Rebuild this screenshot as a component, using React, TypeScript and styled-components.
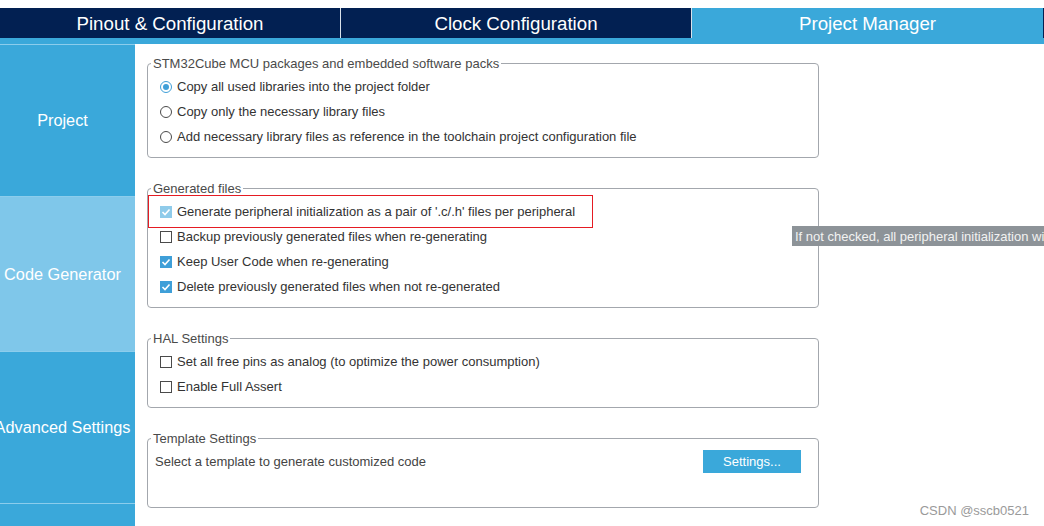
import React from 'react';
import styled, {createGlobalStyle} from 'styled-components';

const GlobalStyle = createGlobalStyle`
  html, body {
    margin: 0;
    padding: 0;
    background: #ffffff;
    overflow: hidden;
  }
  body {
    font-family: "Liberation Sans", Arial, sans-serif;
  }
`

const NAVY = '#022052';
const BLUE = '#3aa8da';

const Page = styled.div`
  position: relative;
  width: 1044px;
  height: 526px;
  padding-top: 8px;
  box-sizing: border-box;
  overflow: hidden;
`

const TabBar = styled.div`
  display: flex;
  height: 30px;
`

const Tab = styled.div<{ $active?: boolean; $width?: number }>`
  ${p => p.$width ? `width: ${p.$width}px;` : 'flex: 1;'}
  display: flex;
  align-items: center;
  justify-content: center;
  padding-top: 1px;
  box-sizing: border-box;
  background: ${p => p.$active ? BLUE : NAVY};
  color: #ffffff;
  font-size: 18.7px;
  border-left: 1px solid #d9e1ea;
  &:first-child {
    border-left: none;
  }
  &:last-child {
    border-right: 1px solid ${NAVY};
  }
`

const Strip = styled.div`
  height: 6px;
  background: ${BLUE};
`

const Body = styled.div`
  display: flex;
  height: 482px;
`

const Sidebar = styled.div`
  width: 135px;
  flex-shrink: 0;
  background: ${BLUE};
  border-top: 1px solid #8ccdec;
  overflow: hidden;
`

const SideItem = styled.div<{ $selected?: boolean }>`
  height: 151px;
  display: flex;
  align-items: center;
  justify-content: center;
  padding-right: 10px;
  background: ${p => p.$selected ? '#7fc7ea' : BLUE};
  border-bottom: 1px solid #8ccdec;
  color: #ffffff;
  font-size: 16.3px;
  white-space: nowrap;
  &:nth-child(2) {
    height: 154px;
  }
`

const Content = styled.div`
  flex: 1;
  padding: 12px 0 0 12px;
  position: relative;
`

const Group = styled.fieldset<{ $extra?: number }>`
  width: 672px;
  box-sizing: border-box;
  margin: 0 0 23px 0;
  padding: 3px 0 ${p => 8 + (p.$extra || 0)}px 0;
  border: 1px solid #a3a7ad;
  border-radius: 4px;
  min-inline-size: 0;
`

const Legend = styled.legend`
  margin-left: 3px;
  padding: 0 2px;
  font-size: 13px;
  line-height: 15px;
  color: #4a4a4a;
`

const Row = styled.div<{ $highlight?: boolean }>`
  position: relative;
  height: 25px;
  display: flex;
  align-items: center;
  gap: 5px;
  padding-left: 12px;
  font-size: 13px;
  color: #333333;
  white-space: nowrap;
  ${p => p.$highlight ? `
    &::after {
      content: '';
      position: absolute;
      left: 0;
      top: -4px;
      width: 445px;
      height: 33px;
      box-sizing: border-box;
      border: 1px solid #e51b23;
    }
  ` : ''}
`

const PlainText = styled(Row)`
  padding-left: 7px;
  padding-right: 17px;
  color: #444444;
`

const Box = styled.span<{ $checked?: boolean; $disabled?: boolean }>`
  width: 12px;
  height: 12px;
  box-sizing: border-box;
  flex-shrink: 0;
  display: inline-flex;
  align-items: center;
  justify-content: center;
  background: ${p => p.$checked ? (p.$disabled ? '#8fcbea' : '#3f9fd8') : '#ffffff'};
  border: 1px solid ${p => p.$checked ? (p.$disabled ? '#8fcbea' : '#3f9fd8') : '#4a4a4a'};
`

const Radio = styled.span<{ $checked?: boolean }>`
  width: 12px;
  height: 12px;
  box-sizing: border-box;
  flex-shrink: 0;
  border-radius: 50%;
  border: 1px solid ${p => p.$checked ? '#3f9fd8' : '#4a4a4a'};
  display: inline-flex;
  align-items: center;
  justify-content: center;
  &::after {
    content: '';
    width: 6px;
    height: 6px;
    border-radius: 50%;
    background: ${p => p.$checked ? '#3f9fd8' : 'transparent'};
  }
`

const Button = styled.button`
  margin-left: auto;
  width: 98px;
  height: 23px;
  border: none;
  background: ${BLUE};
  color: #ffffff;
  font-family: "Liberation Sans", Arial, sans-serif;
  font-size: 13px;
  padding: 0;
`

const Tooltip = styled.div`
  position: absolute;
  left: 792px;
  top: 226px;
  height: 20px;
  padding: 0 3px;
  display: flex;
  align-items: center;
  background: #8d9398;
  color: #f2f2f2;
  font-size: 13px;
  white-space: nowrap;
`

const Watermark = styled.div`
  position: absolute;
  right: 15px;
  bottom: 8px;
  color: #9a9a9a;
  font-size: 13px;
`

const Check: React.FC<{ checked?: boolean; disabled?: boolean }> = ({checked, disabled}) => (
    <Box $checked={checked} $disabled={disabled}>
        {checked && (
            <svg width="10" height="10" viewBox="0 0 10 10">
                <polyline points="1.5,5 4,7.5 8.5,2.5" fill="none" stroke="#ffffff" strokeWidth="1.6"/>
            </svg>
        )}
    </Box>
);

const App: React.FC = () => {
    return (
        <Page>
            <GlobalStyle/>
            <TabBar>
                <Tab $width={340}>Pinout &amp; Configuration</Tab>
                <Tab $width={351}>Clock Configuration</Tab>
                <Tab $active>Project Manager</Tab>
            </TabBar>
            <Strip/>
            <Body>
                <Sidebar>
                    <SideItem>Project</SideItem>
                    <SideItem $selected>Code Generator</SideItem>
                    <SideItem>Advanced Settings</SideItem>
                </Sidebar>
                <Content>
                    <Group>
                        <Legend>STM32Cube MCU packages and embedded software packs</Legend>
                        <Row><Radio $checked/>Copy all used libraries into the project folder</Row>
                        <Row><Radio/>Copy only the necessary library files</Row>
                        <Row><Radio/>Add necessary library files as reference in the toolchain project configuration file</Row>
                    </Group>
                    <Group>
                        <Legend>Generated files</Legend>
                        <Row $highlight><Check checked disabled/>Generate peripheral initialization as a pair of '.c/.h' files per peripheral</Row>
                        <Row><Check/>Backup previously generated files when re-generating</Row>
                        <Row><Check checked/>Keep User Code when re-generating</Row>
                        <Row><Check checked/>Delete previously generated files when not re-generated</Row>
                    </Group>
                    <Group>
                        <Legend>HAL Settings</Legend>
                        <Row><Check/>Set all free pins as analog (to optimize the power consumption)</Row>
                        <Row><Check/>Enable Full Assert</Row>
                    </Group>
                    <Group $extra={25}>
                        <Legend>Template Settings</Legend>
                        <PlainText>
                            Select a template to generate customized code
                            <Button>Settings...</Button>
                        </PlainText>
                    </Group>
                </Content>
            </Body>
            <Tooltip>If not checked, all peripheral initialization will be done in main.c</Tooltip>
            <Watermark>CSDN @sscb0521</Watermark>
        </Page>
    );
};

export default App;
